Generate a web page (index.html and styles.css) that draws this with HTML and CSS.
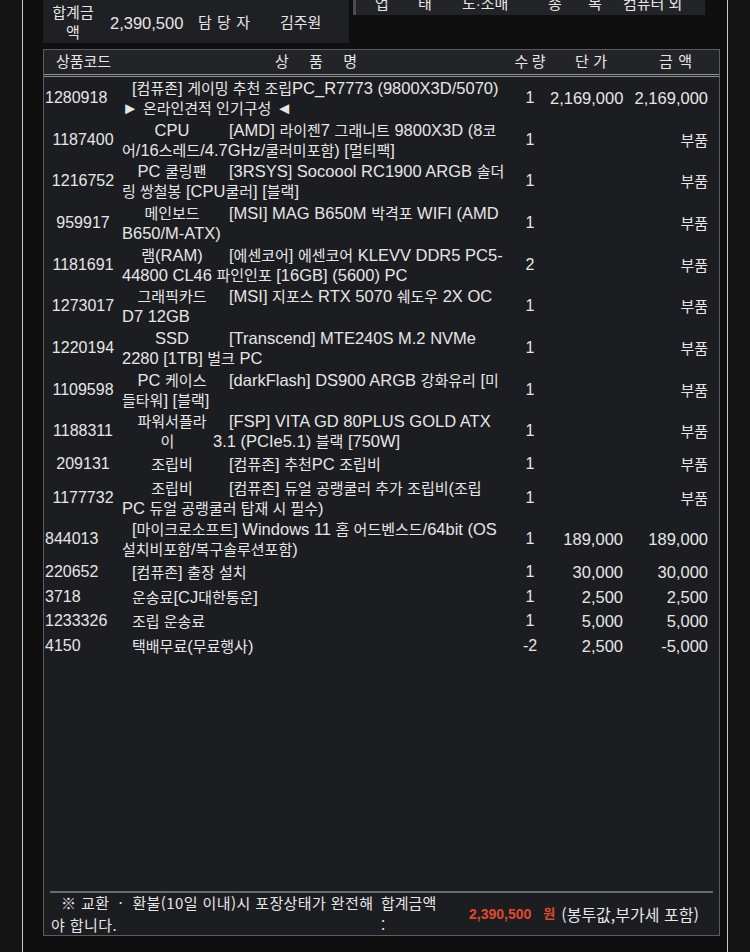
FILE: index.html
```html
<!DOCTYPE html>
<html lang="ko">
<head>
<meta charset="utf-8">
<title>견적서</title>
<link rel="stylesheet" href="styles.css">
</head>
<body>
<div class="frame">
  <div class="top">
    <div class="sum">
      <div class="sum-lbl"><span class="k15">합계금</span><br><span class="k15">액</span></div>
      <div class="sum-val">2,390,500</div>
      <div class="spread sp-mgr k15"><span>담</span><span>당</span><span>자</span></div>
      <div class="sum-name k15">김주원</div>
    </div>
    <div class="biz">
      <div class="biz-row k15">
        <span class="b1">업</span><span class="b2">태</span><span class="b3">도·소매</span><span class="b4">종</span><span class="b5">목</span><span>컴퓨터 외</span>
      </div>
    </div>
  </div>

  <div class="sheet">
    <table class="items">
      <colgroup>
        <col class="c-code"><col class="c-desc"><col class="c-qty"><col class="c-unit"><col class="c-amt">
      </colgroup>
      <thead>
        <tr>
          <th><span class="k">상품코드</span></th>
          <th><span class="spread sp-name k"><span>상</span><span>품</span><span>명</span></span></th>
          <th><span class="spread sp-qty k"><span>수</span><span>량</span></span></th>
          <th><span class="spread sp-unit k"><span>단</span><span>가</span></span></th>
          <th><span class="spread sp-amt k"><span>금</span><span>액</span></span></th>
        </tr>
      </thead>
      <tbody>
        <tr class="two">
          <td class="code l">1280918</td>
          <td class="desc main">[<span class="k">컴퓨존</span>] <span class="k">게이밍 추천 조립</span>PC_R7773 (9800X3D/5070)<br>► <span class="k">온라인견적 인기구성</span> ◄</td>
          <td class="qty">1</td><td class="unit">2,169,000</td><td class="amt">2,169,000</td>
        </tr>
        <tr class="two">
          <td class="code">1187400</td>
          <td class="desc"><span class="lab">CPU</span>[AMD] <span class="k">라이젠</span>7 <span class="k">그래니트</span> 9800X3D (8<span class="k">코</span><br><span class="k">어</span>/16<span class="k">스레드</span>/4.7GHz/<span class="k">쿨러미포함</span>) [<span class="k">멀티팩</span>]</td>
          <td class="qty">1</td><td class="unit"></td><td class="amt"><span class="k">부품</span></td>
        </tr>
        <tr class="two">
          <td class="code">1216752</td>
          <td class="desc"><span class="lab">PC <span class="k">쿨링팬</span></span>[3RSYS] Socoool RC1900 ARGB <span class="k">솔더</span><br><span class="k">링 쌍철봉</span> [CPU<span class="k">쿨러</span>] [<span class="k">블랙</span>]</td>
          <td class="qty">1</td><td class="unit"></td><td class="amt"><span class="k">부품</span></td>
        </tr>
        <tr class="two">
          <td class="code">959917</td>
          <td class="desc"><span class="lab k">메인보드</span>[MSI] MAG B650M <span class="k">박격포</span> WIFI (AMD<br>B650/M-ATX)</td>
          <td class="qty">1</td><td class="unit"></td><td class="amt"><span class="k">부품</span></td>
        </tr>
        <tr class="two">
          <td class="code">1181691</td>
          <td class="desc"><span class="lab"><span class="k">램</span>(RAM)</span>[<span class="k">에센코어</span>] <span class="k">에센코어</span> KLEVV DDR5 PC5-<br>44800 CL46 <span class="k">파인인포</span> [16GB] (5600) PC</td>
          <td class="qty">2</td><td class="unit"></td><td class="amt"><span class="k">부품</span></td>
        </tr>
        <tr class="two">
          <td class="code">1273017</td>
          <td class="desc"><span class="lab k">그래픽카드</span>[MSI] <span class="k">지포스</span> RTX 5070 <span class="k">쉐도우</span> 2X OC<br>D7 12GB</td>
          <td class="qty">1</td><td class="unit"></td><td class="amt"><span class="k">부품</span></td>
        </tr>
        <tr class="two">
          <td class="code">1220194</td>
          <td class="desc"><span class="lab">SSD</span>[Transcend] MTE240S M.2 NVMe<br>2280 [1TB] <span class="k">벌크</span> PC</td>
          <td class="qty">1</td><td class="unit"></td><td class="amt"><span class="k">부품</span></td>
        </tr>
        <tr class="two">
          <td class="code">1109598</td>
          <td class="desc"><span class="lab">PC <span class="k">케이스</span></span>[darkFlash] DS900 ARGB <span class="k">강화유리</span> [<span class="k">미</span><br><span class="k">들타워</span>] [<span class="k">블랙</span>]</td>
          <td class="qty">1</td><td class="unit"></td><td class="amt"><span class="k">부품</span></td>
        </tr>
        <tr class="two">
          <td class="code">1188311</td>
          <td class="desc"><span class="lab k">파워서플라</span>[FSP] VITA GD 80PLUS GOLD ATX<br><span class="lab lab2 k">이</span>3.1 (PCIe5.1) <span class="k">블랙</span> [750W]</td>
          <td class="qty">1</td><td class="unit"></td><td class="amt"><span class="k">부품</span></td>
        </tr>
        <tr class="one">
          <td class="code">209131</td>
          <td class="desc"><span class="lab k">조립비</span>[<span class="k">컴퓨존</span>] <span class="k">추천</span>PC <span class="k">조립비</span></td>
          <td class="qty">1</td><td class="unit"></td><td class="amt"><span class="k">부품</span></td>
        </tr>
        <tr class="two">
          <td class="code">1177732</td>
          <td class="desc"><span class="lab k">조립비</span>[<span class="k">컴퓨존</span>] <span class="k">듀얼 공랭쿨러 추가 조립비</span>(<span class="k">조립</span><br>PC <span class="k">듀얼 공랭쿨러 탑재 시 필수</span>)</td>
          <td class="qty">1</td><td class="unit"></td><td class="amt"><span class="k">부품</span></td>
        </tr>
        <tr class="two">
          <td class="code l">844013</td>
          <td class="desc main">[<span class="k">마이크로소프트</span>] Windows 11 <span class="k">홈 어드벤스드</span>/64bit (OS<br><span class="k">설치비포함</span>/<span class="k">복구솔루션포함</span>)</td>
          <td class="qty">1</td><td class="unit">189,000</td><td class="amt">189,000</td>
        </tr>
        <tr class="one">
          <td class="code l">220652</td>
          <td class="desc main">[<span class="k">컴퓨존</span>] <span class="k">출장 설치</span></td>
          <td class="qty">1</td><td class="unit">30,000</td><td class="amt">30,000</td>
        </tr>
        <tr class="one">
          <td class="code l">3718</td>
          <td class="desc main"><span class="k">운송료</span>[CJ<span class="k">대한통운</span>]</td>
          <td class="qty">1</td><td class="unit">2,500</td><td class="amt">2,500</td>
        </tr>
        <tr class="one">
          <td class="code l">1233326</td>
          <td class="desc main"><span class="k">조립 운송료</span></td>
          <td class="qty">1</td><td class="unit">5,000</td><td class="amt">5,000</td>
        </tr>
        <tr class="one">
          <td class="code l">4150</td>
          <td class="desc main"><span class="k">택배무료</span>(<span class="k">무료행사</span>)</td>
          <td class="qty">-2</td><td class="unit">2,500</td><td class="amt">-5,000</td>
        </tr>
      </tbody>
    </table>

    <div class="foot">
      <div class="note">※ 교환 &nbsp;·&nbsp; 환불(10일 이내)시 포장상태가 완전해<br>야 합니다.</div>
      <div class="tot-lbl">합계금액<br>:</div>
      <div class="tot-val"><span class="red">2,390,500</span><span class="red won">원</span></div>
      <div class="incl">(봉투값,부가세 포함)</div>
    </div>
  </div>
</div>
</body>
</html>
```

FILE: styles.css
```css
* { box-sizing: border-box; }

html, body {
  margin: 0;
  padding: 0;
}

body {
  background: #141414;
  color: #e6e6e6;
  font-family: "Liberation Sans", "Noto Sans CJK KR", sans-serif;
  font-size: 16px;
  line-height: 20px;
  height: 952px;
  overflow: hidden;
}

.k {
  font-size: 15px;
  line-height: 16px;
}
.k15 { font-size: 15px; }

.frame {
  margin-left: 22px;
  width: 706px;
  height: 952px;
  border-left: 1px solid #c8c8c8;
  border-right: 1px solid #c8c8c8;
  background: #0f0f0f;
  padding: 0 7px 0 20px;
}

/* top boxes */
.top {
  display: flex;
  gap: 4px;
  align-items: flex-start;
}

.sum {
  width: 306px;
  height: 43px;
  background: #1f2024;
  display: flex;
  align-items: center;
  padding-top: 2px;
}

.sum-lbl {
  width: 60px;
  text-align: center;
}

.sum-val {
  margin-left: 7px;
  width: 88px;
  font-size: 16.5px;
}

.spread {
  display: inline-flex;
  justify-content: space-between;
}

.sp-mgr { width: 52px; }

.sum-name { margin-left: 30px; }

.biz {
  width: 352px;
  height: 15px;
  overflow: hidden;
  background: #232428;
  border-left: 3px solid #4c4c4e;
  padding-left: 19px;
}

.biz-row {
  display: flex;
  margin-top: -6px;
}

.b1 { width: 43px; }
.b2 { width: 44px; }
.b3 { width: 86px; }
.b4 { width: 40px; }
.b5 { width: 35px; }

/* sheet */
.sheet {
  margin-top: 6px;
  height: 887px;
  border: 1px solid #5c5c5e;
  background: #1c1d21;
  display: flex;
  flex-direction: column;
}

.items {
  width: 100%;
  table-layout: fixed;
  border-collapse: separate;
  border-spacing: 0;
}

.c-code { width: 78px; }
.c-desc { width: 388px; }
.c-qty { width: 40px; }
.c-unit { width: 82px; }
.c-amt { width: 87px; }

.items thead tr { height: 27px; }

.items th {
  font-weight: normal;
  background: #232428;
  border-bottom: 3px double #8e8e90;
  text-align: center;
  padding: 0;
  vertical-align: middle;
}

.items th:first-child { padding-left: 1px; }

.sp-name { width: 82px; }
.sp-qty { width: 31px; }
.sp-unit { width: 32px; }
.sp-amt { width: 33px; }

.items tr.two { height: 41.7px; }
.items tr.one { height: 24.5px; }

.items td {
  padding: 0;
  vertical-align: middle;
  white-space: nowrap;
}

.code { text-align: center; }
.code.l { text-align: left; padding-left: 1px; }

.desc {
  padding-left: 1px;
  font-size: 16.5px;
}
.desc.main { text-indent: 10px; }

.lab {
  display: inline-block;
  width: 100px;
  margin-right: 7px;
  text-align: center;
  text-indent: 0;
}

.lab2 {
  width: 91px;
  margin-right: 0;
}

.qty { text-align: center; }
.items td.unit { text-align: right; padding-right: 9px; font-size: 16.5px; }
.items td.amt { text-align: right; padding-right: 11px; font-size: 16.5px; }

/* footer */
.foot {
  margin: auto 6px 0 6px;
  border-top: 2px solid #6a6a6c;
  height: 44px;
  display: flex;
  align-items: center;
  font-family: "Noto Sans CJK KR", "Liberation Sans", sans-serif;
  font-size: 15px;
  line-height: 22px;
}

.note {
  width: 331px;
  padding-left: 1px;
  text-indent: 10px;
  white-space: nowrap;
  letter-spacing: 0.4px;
}

.tot-lbl {
  width: 88px;
}

.tot-val {
  display: flex;
  align-items: center;
  font-family: "Liberation Sans", "Noto Sans CJK KR", sans-serif;
}

.red {
  color: #e0492d;
  font-weight: bold;
  font-size: 14px;
}

.won {
  margin-left: 12px;
  font-size: 13px;
}

.incl {
  margin-left: 6px;
  font-size: 16px;
}
```
